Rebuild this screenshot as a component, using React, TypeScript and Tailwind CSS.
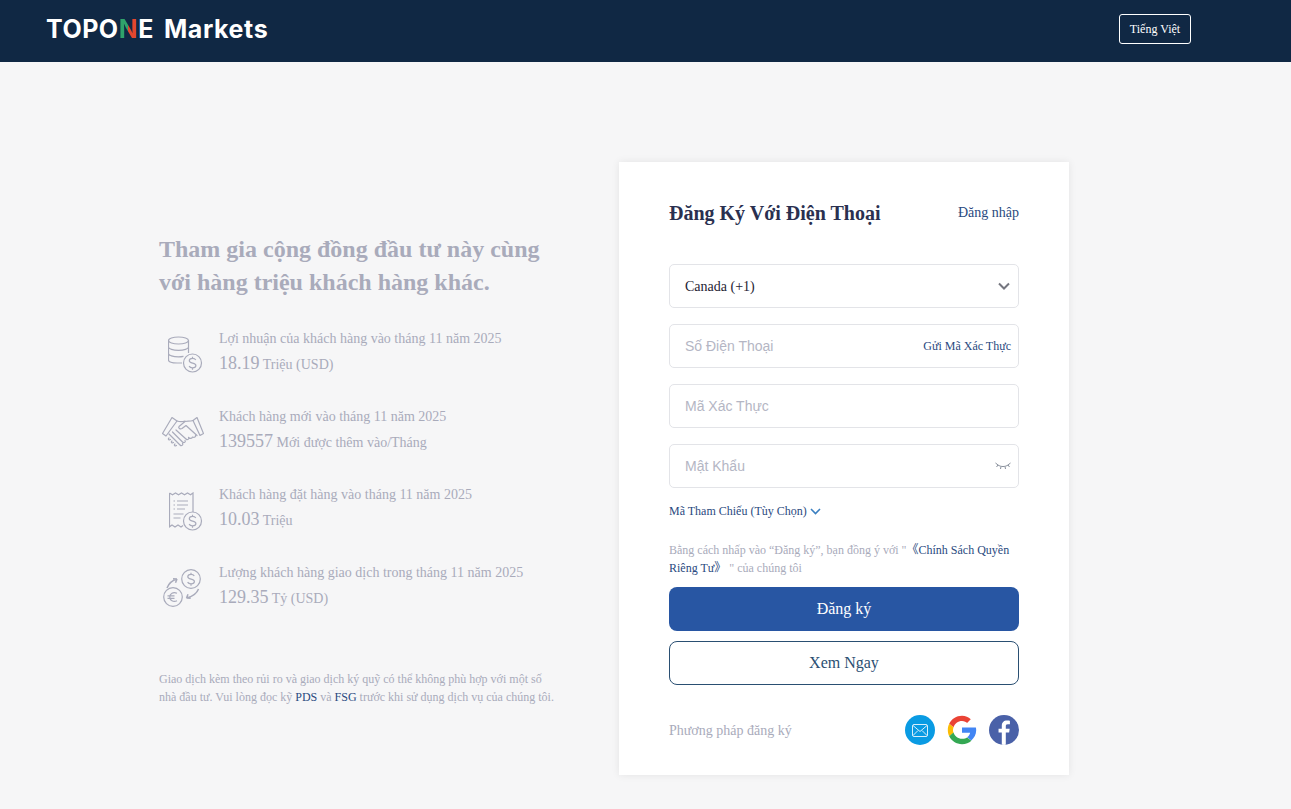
import React from "react";

const CoinsIcon = () => (
  <svg width="35" height="38" viewBox="0 0 35 38" fill="none" stroke="#a9abbb" strokeWidth="1.2">
    <ellipse cx="10.500" cy="4.500" rx="10" ry="3.500" />
    <path d="M0.500 4.500V24c0 1.500 3.500 2.800 8.500 3h5M20.500 4.500V17M0.500 11c0 1.800 4.500 3.300 10 3.300s10-1.500 10-3.300M0.500 17.500c0 1.800 4.500 3.300 10 3.300 2 0 3.500-.2 5-.5" />
    <circle cx="24.500" cy="27" r="9" />
    <path d="M27.800 24c-.6-1-1.800-1.600-3.300-1.600-1.800 0-3.200.9-3.200 2.300 0 3.100 6.600 1.700 6.600 4.800 0 1.400-1.500 2.300-3.400 2.300-1.500 0-2.800-.6-3.400-1.700M24.500 20.800v1.600M24.500 32v1.800" />
  </svg>
);
const HandshakeIcon = () => (
  <svg width="42" height="31" viewBox="0 0 42 31" fill="none" stroke="#a9abbb" strokeWidth="1.2" strokeLinejoin="round" strokeLinecap="round">
    <path d="M10 0.500l5 3.500-11 15L0.500 16.500zM35 0.500l-4 3 7 15 3.500-2z" />
    <path d="M15 4c3 1 5 1 8 0M31 3.500c-3 1-5 .5-8 1l-6 5c-1 1.500 1 3 3 2l4-3 11 10" />
    <path d="M7 17l11 11c1.500 1.500 3.500 0 2.500-1.500M10.500 15l10 10c1.500 1.500 3.500 0 2.500-1.500M14 13l10 9c1.500 1.500 3.500 0 2.500-1.500M26.500 20.500c1.500 1.500 3.500 1 4-.5 2 1 3.500-.5 3-1.500" />
    <path d="M7 21c-1.500 1 0 2.500 1.500 1.500M10 24c-1.500 1 0 2.500 1.500 1.500M13 27c-1.500 1 0 2.500 1.500 1.500" />
  </svg>
);
const ReceiptIcon = () => (
  <svg width="34" height="39" viewBox="0 0 34 39" fill="none" stroke="#a9abbb" strokeWidth="1.2">
    <path d="M0.500 1l3 1.800 3-1.800 3 1.800 3-1.800 3 1.800 3-1.800 3 1.800 2.500-1.800v19M14 33.500l-2 1.500-3-2-3 2-3-2-2.500 1.800V1" />
    <path d="M8 9h11M8 13h11M8 17h8M4.500 9H6M4.500 13H6M4.500 17H6M4.500 22h10M4.500 26h7" />
    <circle cx="23.500" cy="29" r="9" />
    <path d="M26.800 26c-.6-1-1.800-1.600-3.300-1.600-1.800 0-3.200.9-3.200 2.300 0 3.100 6.600 1.700 6.600 4.800 0 1.400-1.500 2.300-3.400 2.300-1.500 0-2.800-.6-3.400-1.700M23.500 22.800v1.600M23.500 34v1.800" />
  </svg>
);
const ExchangeIcon = () => (
  <svg width="39" height="39" viewBox="0 0 39 39" fill="none" stroke="#a9abbb" strokeWidth="1.2">
    <circle cx="28" cy="10" r="9.300" />
    <path d="M31.300 7c-.6-1-1.800-1.600-3.300-1.600-1.800 0-3.200.9-3.200 2.300 0 3.100 6.600 1.700 6.600 4.800 0 1.400-1.500 2.300-3.400 2.300-1.500 0-2.800-.6-3.400-1.700M28 3.800v1.600M28 15v1.800" />
    <circle cx="10" cy="28" r="9.300" />
    <path d="M14 24.300c-3.800-1.800-7.200.4-7.200 3.700s3.400 5.500 7.200 3.700M4.500 26.800h7M4.500 29.300h7" />
    <path d="M4 19c1.500-4 5-7.500 10-9M14 10l-4-.3M14 10l-1.500 3.800M35.500 20c-1.500 4-6 7.500-12 9M23.500 29l4.200.2M23.500 29l1.500-3.800" strokeWidth="1.500" />
  </svg>
);
const GoogleIcon = () => (
  <svg width="30" height="30" viewBox="0 0 48 48">
    <path fill="#EA4335" d="M24 9.500c3.900 0 6.600 1.700 8.100 3.100l5.900-5.800C34.400 3.500 29.600 1.300 24 1.300 15 1.300 7.300 6.400 3.500 14l6.900 5.400C12.200 13.700 17.600 9.500 24 9.500z" />
    <path fill="#4285F4" d="M46.700 24.500c0-1.900-.2-3.300-.5-4.700H24v8.500h13c-.3 2.100-1.700 5.300-4.800 7.400l6.700 5.200c4.600-4.100 7.800-10.100 7.800-16.400z" />
    <path fill="#FBBC05" d="M10.400 28.600C9.900 27.200 9.600 25.600 9.600 24s.3-3.200.8-4.600L3.500 14C2 17 1.300 20.400 1.300 24s.8 7 2.200 10l6.900-5.400z" />
    <path fill="#34A853" d="M24 46.700c6.100 0 11.300-2 15-5.500l-6.800-5.300c-1.800 1.300-4.300 2.200-8.200 2.200-6.400 0-11.800-4.200-13.600-10.100L3.500 34C7.300 41.600 15 46.700 24 46.700z" />
  </svg>
);

const stats = [
  { icon: <div className="pl-[9px] mt-[7px]"><CoinsIcon /></div>, title: "Lợi nhuận của khách hàng vào tháng 11 năm 2025", num: "18.19", unit: "Triệu (USD)" },
  { icon: <div className="pl-[3px] mt-[10px]"><HandshakeIcon /></div>, title: "Khách hàng mới vào tháng 11 năm 2025", num: "139557", unit: "Mới được thêm vào/Tháng" },
  { icon: <div className="pl-[10px] mt-[7px]"><ReceiptIcon /></div>, title: "Khách hàng đặt hàng vào tháng 11 năm 2025", num: "10.03", unit: "Triệu" },
  { icon: <div className="pl-[4px] mt-[6px]"><ExchangeIcon /></div>, title: "Lượng khách hàng giao dịch trong tháng 11 năm 2025", num: "129.35", unit: "Tỷ (USD)" },
];

const fieldBox = "mt-4 h-11 rounded-[5px] border border-[#e3e4e8] bg-white flex items-center pl-[15px]";
const placeholder = "font-['Liberation_Sans',sans-serif] text-sm text-[#b4b6c4]";

export default function App() {
  return (
    <div className="min-h-[809px] bg-[#f6f6f7] font-['Liberation_Serif','Noto_Sans_CJK_SC',serif]">
      <header className="h-[62px] bg-[#102844] flex items-center justify-between pl-[46px] pr-[100px] pb-1">
        <div className="font-['Inter',sans-serif] text-[25px] font-bold text-white tracking-[0.5px] leading-none flex">
          <span>TOPO</span>
          <span className="bg-[linear-gradient(90deg,#2fa36b_0%,#2fa36b_50%,#e2472f_50%,#e2472f_100%)] bg-clip-text text-transparent">N</span>
          <span>E</span>
          <span className="ml-[10px] tracking-[0.6px]">Markets</span>
        </div>
        <button className="h-[30px] w-[72px] rounded-[3px] border border-white text-white text-xs">Tiếng Việt</button>
      </header>

      <main className="flex justify-center pt-[100px] pb-[34px] pl-[159px] pr-[222px]">
        <section className="w-[395px] shrink-0 pt-[71px] mr-[65px]">
          <h1 className="text-2xl leading-[33px] font-bold text-[#a9abbb]">
            Tham gia cộng đồng đầu tư này cùng<br />với hàng triệu khách hàng khác.
          </h1>
          <div className="mt-[30px] flex flex-col">
            {stats.map((s) => (
              <div key={s.title} className="flex items-start h-[78px]">
                <div className="w-[60px] shrink-0">{s.icon}</div>
                <div>
                  <div className="text-sm leading-5 text-[#a9abbb]">{s.title}</div>
                  <div className="leading-6 text-[#a9abbb] text-sm">
                    <span className="text-lg">{s.num}</span> {s.unit}
                  </div>
                </div>
              </div>
            ))}
          </div>
          <p className="mt-[29px] text-xs leading-[18px] text-[#a9abbb]">
            Giao dịch kèm theo rủi ro và giao dịch ký quỹ có thể không phù hợp với một số<br />
            nhà đầu tư. Vui lòng đọc kỹ <span className="text-[#2a4a80]">PDS</span> và <span className="text-[#2a4a80]">FSG</span> trước khi sử dụng dịch vụ của chúng tôi.
          </p>
        </section>

        <section className="w-[450px] h-[613px] shrink-0 bg-white shadow-[0_0_8px_rgba(0,0,0,0.08)] px-[50px] pt-[40px]">
          <div className="flex items-center justify-between h-[24px]">
            <h2 className="text-xl font-bold text-[#2a3050] pb-[2px]">Đăng Ký Với Điện Thoại</h2>
            <span className="text-sm text-[#2a4a80] -mt-[2px]">Đăng nhập</span>
          </div>
          <div className="mt-[38px] h-11 rounded-[5px] border border-[#e3e4e8] flex items-center justify-between pl-[15px] pr-[8px]">
            <span className="text-sm text-[#1f2333] pt-[2px]">Canada (+1)</span>
            <svg width="12" height="8" viewBox="0 0 12 8" fill="none" stroke="#75767f" strokeWidth="2"><path d="M1 1.500l5 5 5-5" /></svg>
          </div>
          <div className={fieldBox + " pr-[7px] justify-between"}>
            <span className={placeholder}>Số Điện Thoại</span>
            <span className="text-xs text-[#2a4a80]">Gửi Mã Xác Thực</span>
          </div>
          <div className={fieldBox}>
            <span className={placeholder}>Mã Xác Thực</span>
          </div>
          <div className={fieldBox + " pr-[7px] justify-between"}>
            <span className={placeholder}>Mật Khẩu</span>
            <svg width="16" height="8" viewBox="0 0 16 8" fill="none" stroke="#7b8290" strokeWidth="0.9"><path d="M0.500 1l2.500 2c3 2 7 2 10 0l2.500-2M3 3L1.500 5M6 4.500L5.500 7M10 4.500l.5 2.500M13 3l1.500 2" /></svg>
          </div>
          <div className="mt-[14px] flex items-center text-xs leading-[18px] text-[#2a4a80]">
            Mã Tham Chiếu (Tùy Chọn)
            <svg className="ml-[3px]" width="11" height="7" viewBox="0 0 11 7" fill="none" stroke="#3a7fc0" strokeWidth="1.600"><path d="M1 1l4.500 4.500L10 1" /></svg>
          </div>
          <p className="mt-[21px] text-xs leading-[18px] text-[#a9abbb] h-9 overflow-hidden">
            Bằng cách nhấp vào “Đăng ký”, bạn đồng ý với "<span className="text-[#2a4a80]">《Chính Sách Quyền Riêng Tư》</span> " của chúng tôi
          </p>
          <button className="mt-[10px] block w-full h-11 rounded-lg bg-[#2856a3] text-white text-base">Đăng ký</button>
          <button className="mt-[10px] block w-full h-11 rounded-lg border border-[#2a4f72] text-[#2a4f72] text-base">Xem Ngay</button>
          <div className="mt-[30px] flex items-center justify-between h-[30px]">
            <span className="text-sm text-[#a9abbb] pt-[2px]">Phương pháp đăng ký</span>
            <div className="flex items-center gap-[12px]">
              <div className="size-[30px] rounded-full bg-[#0a9be3] flex items-center justify-center">
                <svg width="16" height="13" viewBox="0 0 16 13" fill="none" stroke="#d8eefb" strokeWidth="1"><rect x="0.500" y="0.500" width="15" height="12" rx="1.500" /><path d="M1 1.500l7 6 7-6M1 11.500l5-5M15 11.500l-5-5" /></svg>
              </div>
              <GoogleIcon />
              <div className="size-[30px] rounded-full bg-[#4a61a8] flex items-end justify-center overflow-hidden">
                <svg width="13" height="25" viewBox="0 0 12 23" fill="#fff"><path d="M3.500 23V11.500H0.500V8h3V5.500C3.500 2.300 5.400.5 8.200.5c1.300 0 2.400.1 2.800.2v3.200H9c-1.500 0-1.800.7-1.800 1.800V8h3.600l-.5 3.500H7.200V23z" /></svg>
              </div>
            </div>
          </div>
        </section>
      </main>
    </div>
  );
}
